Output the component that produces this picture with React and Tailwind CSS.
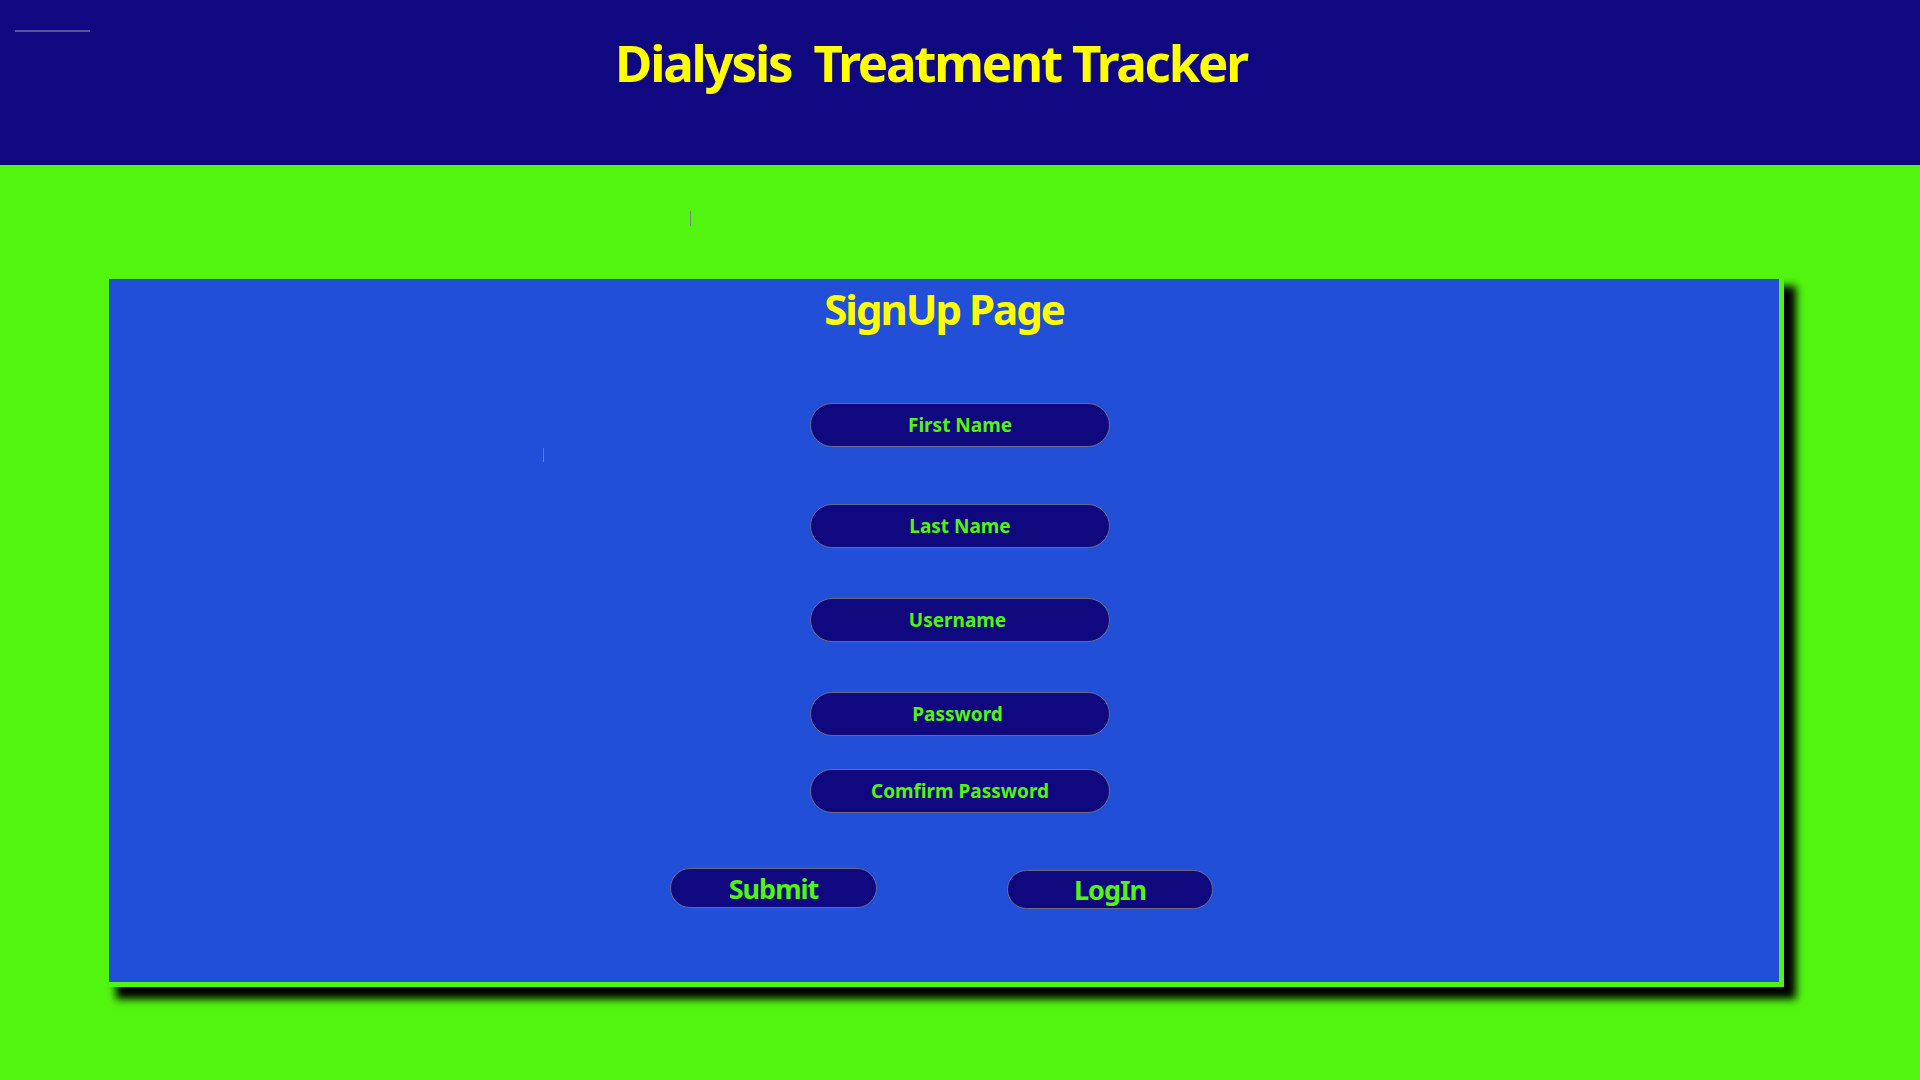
import React from "react";

const fields = [
  { name: "firstName", label: "First Name", mt: "mt-[73px]", type: "text" },
  { name: "lastName", label: "Last Name", mt: "mt-[57px]", type: "text" },
  { name: "username", label: "Username ", mt: "mt-[50px]", type: "text" },
  { name: "password", label: "Password ", mt: "mt-[50px]", type: "password" },
  { name: "confirm", label: "Comfirm Password", mt: "mt-[33px]", type: "password" },
];

function SignUp() {
  return (
    <div className="min-h-screen bg-[#52f510] font-['Noto_Sans','Open_Sans',sans-serif]">
      {/* HEADER */}
      <header className="relative h-[165px] bg-[#100880] flex justify-center pr-[58px]">
        <span className="absolute left-[15px] top-[30px] w-[75px] h-[2px] bg-[#55559a]" />
        <h1 className="mt-[37px] text-[51px] leading-none font-bold tracking-[-2.2px] text-[#ffff00] whitespace-pre">
          Dialysis  Treatment Tracker
        </h1>
      </header>

      <div className="relative">
        <span className="absolute left-[690px] top-[46px] w-px h-[15px] bg-[#808080]" />
      </div>

      {/* CARD */}
      <div className="mt-[109px] ml-[104px] w-[1680px] h-[713px] border-[5px] border-[#52f510] bg-[#224fd8] shadow-[12px_12px_8px_#000] relative">
        <span className="absolute left-[434px] top-[169px] w-px h-[14px] bg-[#808080]" />

        <div className="flex flex-col items-center">
          <h2 className="mt-[9px] text-[42px] leading-none font-bold tracking-[-2px] text-[#ffff00]">
            SignUp Page
          </h2>

          <div className="flex flex-col items-center pl-[32px]">
            {fields.map((f) => (
              <input
                key={f.name}
                name={f.name}
                type={f.type}
                placeholder={f.label}
                className={`${f.mt} w-[300px] h-[44px] rounded-full border border-[#6b6b8f] bg-[#10087f] text-center text-[19px] font-bold text-[#52f510] placeholder:text-[#52f510] placeholder:whitespace-pre outline-none`}
              />
            ))}
          </div>
        </div>

        <div className="mt-[55px] pl-[561px] flex items-start gap-[130px]">
          <button className="w-[207px] h-[40px] rounded-full border border-[#6b6b8f] bg-[#10087f] text-[27px] leading-none font-bold tracking-[-1px] text-[#52f510]">
            Submit
          </button>
          <button className="mt-[2px] w-[206px] h-[39px] rounded-full border border-[#6b6b8f] bg-[#10087f] text-[27px] leading-none font-bold tracking-[-1px] text-[#52f510]">
            LogIn
          </button>
        </div>
      </div>
    </div>
  );
}

export default function App() {
  return <SignUp />;
}
